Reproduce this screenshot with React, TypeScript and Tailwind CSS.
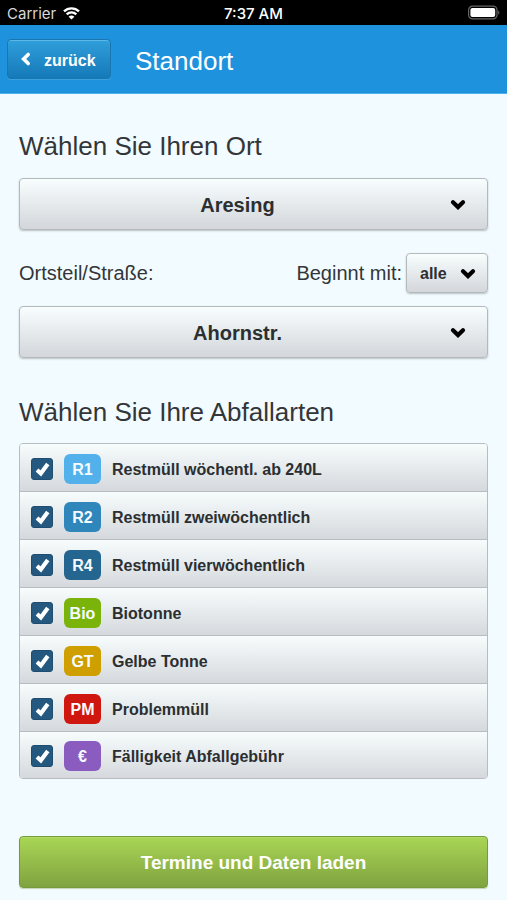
import type { ReactNode } from "react";

const wasteTypes = [
  { id: "r1", badge: "R1", color: "bg-[#52b1eb]", label: "Restmüll wöchentl. ab 240L" },
  { id: "r2", badge: "R2", color: "bg-[#2e86bb]", label: "Restmüll zweiwöchentlich" },
  { id: "r4", badge: "R4", color: "bg-[#24668f]", label: "Restmüll vierwöchentlich" },
  { id: "bio", badge: "Bio", color: "bg-[#7ab30a]", label: "Biotonne" },
  { id: "gt", badge: "GT", color: "bg-[#cf9f00]", label: "Gelbe Tonne" },
  { id: "pm", badge: "PM", color: "bg-[#d0170f]", label: "Problemmüll" },
  { id: "fee", badge: "€", color: "bg-[#8a5cc0]", label: "Fälligkeit Abfallgebühr" }
];

function StatusBar() {
  return (
    <div className="grid h-[25px] grid-cols-3 items-center bg-black px-[7px] font-['Inter',sans-serif] text-[15px] leading-5 text-white">
      <div className="flex items-center gap-[7px] pt-[2px] text-[#d8d8d8]">
        <span>Carrier</span>
        <svg width="17" height="13" viewBox="0 0 17 13" fill="none" aria-hidden="true">
          <path d="M1 4.4C5.2.3 11.8.3 16 4.4" stroke="#fff" strokeWidth="2.4" />
          <path d="M3.7 7.3c2.7-2.6 6.9-2.6 9.6 0" stroke="#fff" strokeWidth="2.4" />
          <path d="M8.5 12.6 5.6 9.7c1.6-1.5 4.2-1.5 5.8 0z" fill="#fff" />
        </svg>
      </div>
      <span className="pt-[2px] text-center font-medium">7:37 AM</span>
      <svg className="justify-self-end" width="33" height="15" viewBox="0 0 33 15" aria-hidden="true">
        <rect x="1.6" y="1.1" width="28.4" height="12.8" rx="4" fill="none" stroke="#666" strokeWidth="1.2" />
        <rect x="3.4" y="2.9" width="24.8" height="9.2" rx="2" fill="#fff" />
        <path d="M31.2 5.4c1.6.7 1.6 3.5 0 4.2z" fill="#666" />
      </svg>
    </div>
  );
}

function Header() {
  return (
    <header className="flex h-[69px] items-center gap-6 border-b border-[#4db0e8] bg-[#1e92dc] px-[7px]">
      <button
        type="button"
        className="flex h-10 w-[104px] items-center gap-3 rounded border border-[#1b75ae] bg-linear-to-b from-[#2f9fdb] to-[#1579b8] pl-3 text-base font-bold text-white shadow-[inset_0_1px_0_#5db8e8,0_1px_1px_#3ba3e2]"
      >
        <svg width="12" height="16" viewBox="0 0 12 16" fill="none" aria-hidden="true">
          <path d="M8.2 3.4 3.6 8l4.6 4.6" stroke="#fff" strokeWidth="3.6" strokeLinecap="round" />
        </svg>
        <span className="pt-1">zurück</span>
      </button>
      <h1 className="pt-1 text-[26px] leading-8 text-white">Standort</h1>
    </header>
  );
}

function Chevron({ className }: { className: string }) {
  return (
    <svg
      className={`pointer-events-none absolute top-1/2 -translate-y-1/2 ${className}`}
      width="16"
      height="12"
      viewBox="0 0 16 12"
      fill="none"
      aria-hidden="true"
    >
      <path d="M3 4.2 8 9l5-4.8" stroke="#000" strokeWidth="4.2" strokeLinecap="round" />
    </svg>
  );
}

const selectStyle =
  "w-full appearance-none rounded border border-[#b4b9bc] bg-linear-to-b from-[#f8fdfe] to-[#d3d7db] font-bold text-[#2b2f31] shadow-[0_1px_2px_#b9c0c4]";

function PlaceSelect({ id, label, children }: { id: string; label?: string; children: ReactNode }) {
  return (
    <div className="relative">
      <select
        id={id}
        aria-label={label}
        className={`${selectStyle} h-[52px] pt-[2px] pr-12 pl-4 text-xl [text-align-last:center]`}
      >
        {children}
      </select>
      <Chevron className="right-[22px]" />
    </div>
  );
}

function WasteRow({ id, badge, color, label }: (typeof wasteTypes)[number]) {
  return (
    <li className="h-12 border-b border-[#b7bcbf] bg-linear-to-b from-[#f7fcfd] to-[#d5d9dd] last:h-[46px] last:border-b-0">
      <label htmlFor={id} className="flex h-full items-center gap-[11px] pt-[2px] pl-[11px]">
        <span className="grid h-[22px] w-[22px] shrink-0">
          <input
            id={id}
            type="checkbox"
            defaultChecked
            className="peer col-start-1 row-start-1 m-0 appearance-none rounded-[3px] border border-[#1d4d70] bg-white checked:bg-[#24587f]"
          />
          <svg
            className="pointer-events-none invisible col-start-1 row-start-1 peer-checked:visible"
            width="22"
            height="22"
            viewBox="0 0 22 22"
            fill="none"
            aria-hidden="true"
          >
            <path d="m6 12 3.8 3.4L16.8 6" stroke="#fff" strokeWidth="4.2" />
          </svg>
        </span>
        <span
          className={`flex h-[30px] w-[37px] shrink-0 items-center justify-center rounded-md pt-[2px] text-base font-bold text-[#f5fbff] ${color}`}
        >
          {badge}
        </span>
        <span className="pt-[2px] text-base font-bold text-[#2b2f31]">{label}</span>
      </label>
    </li>
  );
}

export default function App() {
  return (
    <div className="min-h-screen bg-[#f2fbff] font-['Liberation_Sans',Arial,sans-serif] text-[#333638]">
      <StatusBar />
      <Header />
      <main className="px-[19px] pt-9 pb-3">
        <h2 className="mb-4 text-[26px] leading-8">Wählen Sie Ihren Ort</h2>
        <PlaceSelect id="place" label="Ort">
          <option>Aresing</option>
        </PlaceSelect>

        <div className="mt-[23px] mb-[13px] flex items-center">
          <label htmlFor="street" className="text-xl">
            Ortsteil/Straße:
          </label>
          <label htmlFor="initial" className="mr-1 ml-auto text-xl">
            Beginnt mit:
          </label>
          <div className="relative w-[82px]">
            <select id="initial" className={`${selectStyle} h-10 pt-[2px] pr-8 pl-[13px] text-base`}>
              <option>alle</option>
            </select>
            <Chevron className="right-3" />
          </div>
        </div>
        <PlaceSelect id="street">
          <option>Ahornstr.</option>
        </PlaceSelect>

        <h2 className="mt-[38px] mb-[15px] text-[26px] leading-8">Wählen Sie Ihre Abfallarten</h2>
        <ul className="overflow-hidden rounded border border-[#b7bcbf]">
          {wasteTypes.map((type) => (
            <WasteRow key={type.id} {...type} />
          ))}
        </ul>

        <button
          type="button"
          className="mt-[57px] h-[52px] w-full rounded border border-[#769b3c] bg-linear-to-b from-[#a9d655] to-[#80a340] pt-[2px] text-[19px] font-bold text-white shadow-[inset_0_1px_0_#b3dc66,0_1px_1px_#c3d3b5]"
        >
          Termine und Daten laden
        </button>
      </main>
    </div>
  );
}
